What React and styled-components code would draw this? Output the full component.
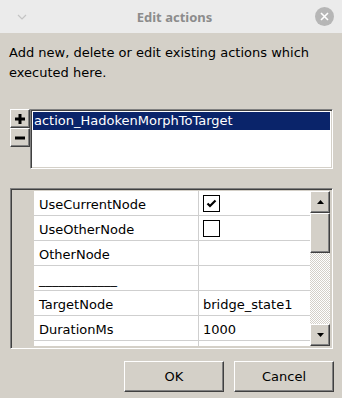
import React from 'react'
import styled, { createGlobalStyle } from 'styled-components'

const GlobalStyle = createGlobalStyle`
  html, body {
    margin: 0;
    padding: 0;
    width: 342px;
    height: 398px;
    overflow: hidden;
  }
  body {
    font-family: "DejaVu Sans", Tahoma, sans-serif;
  }
`

const Window = styled.div`
  width: 342px;
  height: 398px;
  display: flex;
  flex-direction: column;
  background: #d4d0c8;
`

const TitleBar = styled.div`
  height: 33px;
  flex: none;
  background: #ebebeb;
  display: flex;
  align-items: center;
  justify-content: space-between;
  padding: 0 8px 0 14px;
  box-sizing: border-box;
`

const Title = styled.div`
  font-family: "Noto Sans", "DejaVu Sans", sans-serif;
  font-weight: 700;
  font-size: 13px;
  color: #8c8c8c;
  margin-left: 4px;
`

const CloseBtn = styled.div`
  width: 19px;
  height: 19px;
  border-radius: 50%;
  background: #b6b6b6;
  display: flex;
  align-items: center;
  justify-content: center;
`

const Body = styled.div`
  flex: 1;
  display: flex;
  flex-direction: column;
  padding: 10px 9px 0 10px;
`

const Description = styled.p`
  margin: 0;
  font-size: 13px;
  line-height: 20px;
  color: #000;
  margin-left: -1px;
`

const ListRow = styled.div`
  display: flex;
  margin-top: 26px;
  height: 60px;
`

const SideButtons = styled.div`
  width: 20px;
  display: flex;
  flex-direction: column;
`

const Raised = styled.div`
  box-sizing: border-box;
  background: #d4d0c8;
  border: 1px solid;
  border-color: #fff #404040 #404040 #fff;
  box-shadow: inset -1px -1px 0 #808080;
`

const SmallBtn = styled(Raised)`
  height: 19px;
  display: flex;
  align-items: center;
  justify-content: center;
`

const Sunken = styled.div`
  box-sizing: border-box;
  border: 1px solid;
  border-color: #808080 #fff #fff #808080;
  box-shadow: inset 1px 1px 0 #404040, inset -1px -1px 0 #d4d0c8;
`

const ListBox = styled(Sunken)`
  flex: 1;
  background: #fff;
  padding: 2px;
`

const ListItem = styled.div`
  height: 18px;
  line-height: 18px;
  background: ${(p) => (p.selected ? '#0a246a' : 'transparent')};
  color: ${(p) => (p.selected ? '#fff' : '#000')};
  font-size: 13px;
  padding-left: 1px;
`

const Grid = styled(Sunken)`
  margin-top: 19px;
  height: 161px;
  display: flex;
  padding: 2px;
  background: #d4d0c8;
`

const Gutter = styled.div`
  width: 21px;
  background: #d4d0c8;
`

const Rows = styled.div`
  flex: 1;
  overflow: hidden;
  background: #fff;
`

const Row = styled.div`
  display: grid;
  grid-template-columns: 165px 1fr;
  height: 25px;
  border-bottom: 1px solid #cfcfcf;
  box-sizing: border-box;
`

const Cell = styled.div`
  font-size: 13px;
  color: #000;
  display: flex;
  align-items: center;
  padding-left: ${(p) => p.pl || '5px'};
  padding-top: 2px;
  border-right: ${(p) => (p.divider ? '1px solid #cfcfcf' : 'none')};
`

const Check = styled.div`
  width: 17px;
  height: 17px;
  box-sizing: border-box;
  border: 1px solid #000;
  background: #fff;
  display: flex;
  align-items: center;
  justify-content: center;
  margin-top: -2px;
`

const Scrollbar = styled.div`
  width: 20px;
  display: flex;
  flex-direction: column;
  background: repeating-conic-gradient(#d4d0c8 0 25%, #fff 0 50%) 0 0 / 2px 2px;
`

const ScrollBtn = styled(Raised)`
  height: 22px;
  flex: none;
  display: flex;
  align-items: center;
  justify-content: center;
`

const Thumb = styled(Raised)`
  height: 40px;
  flex: none;
`

const Track = styled.div`
  flex: 1;
`

const Footer = styled.div`
  display: flex;
  justify-content: flex-end;
  gap: 10px;
  margin-top: 12px;
  margin-right: -1px;
`

const DlgButton = styled(Raised)`
  width: 100px;
  height: 31px;
  display: flex;
  align-items: center;
  justify-content: center;
  font-size: 13px;
  color: #000;
`

const Arrow = ({ up }) => (
  <svg width="7" height="4" viewBox="0 0 7 4">
    <polygon points={up ? '3.5,0 7,4 0,4' : '0,0 7,0 3.5,4'} fill="#000" />
  </svg>
)

const rows = [
  { name: 'UseCurrentNode', check: true },
  { name: 'UseOtherNode', check: false },
  { name: 'OtherNode' },
  { name: '____________' },
  { name: 'TargetNode', value: 'bridge_state1' },
  { name: 'DurationMs', value: '1000' },
  { name: '' },
]

export default function App() {
  return (
    <Window>
      <GlobalStyle />
      <TitleBar>
        <svg width="16" height="16" viewBox="0 0 16 16">
          <polyline points="4,6 8,10 12,6" fill="none" stroke="#c4c4c4" strokeWidth="1.2" />
        </svg>
        <Title>Edit actions</Title>
        <CloseBtn>
          <svg width="9" height="9" viewBox="0 0 9 9">
            <path d="M1 1 L8 8 M8 1 L1 8" stroke="#fff" strokeWidth="1.6" />
          </svg>
        </CloseBtn>
      </TitleBar>
      <Body>
        <Description>
          Add new, delete or edit existing actions which
          <br />
          executed here.
        </Description>
        <ListRow>
          <SideButtons>
            <SmallBtn>
              <svg width="10" height="10" viewBox="0 0 10 10">
                <path d="M3.5 0h3v3.5h3.5v3h-3.5v3.5h-3v-3.5h-3.5v-3h3.5z" fill="#000" />
              </svg>
            </SmallBtn>
            <SmallBtn>
              <svg width="10" height="4" viewBox="0 0 10 4">
                <rect width="10" height="3" y="0.5" fill="#000" />
              </svg>
            </SmallBtn>
          </SideButtons>
          <ListBox>
            <ListItem selected>action_HadokenMorphToTarget</ListItem>
          </ListBox>
        </ListRow>
        <Grid>
          <Gutter />
          <Rows>
            {rows.map((r, i) => (
              <Row key={i}>
                <Cell divider>{r.name}</Cell>
                <Cell pl="4px">
                  {r.check !== undefined ? (
                    <Check>
                      {r.check && (
                        <svg width="11" height="9" viewBox="0 0 11 9">
                          <polyline points="1.5,4.5 4,7 9.5,1.5" fill="none" stroke="#000" strokeWidth="2.2" />
                        </svg>
                      )}
                    </Check>
                  ) : (
                    r.value
                  )}
                </Cell>
              </Row>
            ))}
          </Rows>
          <Scrollbar>
            <ScrollBtn>
              <Arrow up />
            </ScrollBtn>
            <Thumb />
            <Track />
            <ScrollBtn>
              <Arrow />
            </ScrollBtn>
          </Scrollbar>
        </Grid>
        <Footer>
          <DlgButton>OK</DlgButton>
          <DlgButton>Cancel</DlgButton>
        </Footer>
      </Body>
    </Window>
  )
}
